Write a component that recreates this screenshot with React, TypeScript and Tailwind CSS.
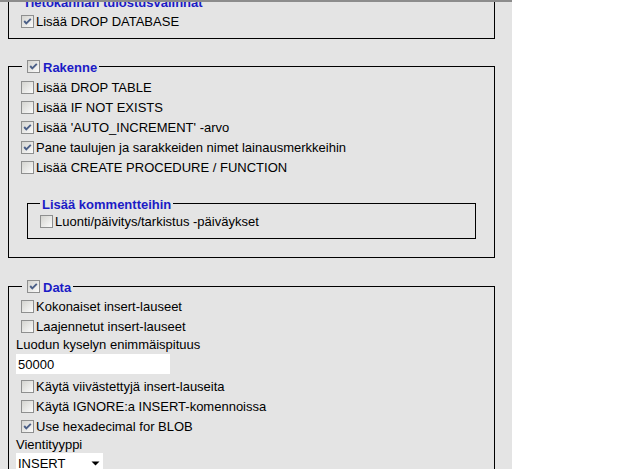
import React from "react";

type BoxProps = { checked?: boolean; className?: string };

function Box({ checked, className = "" }: BoxProps) {
  return (
    <span
      className={`inline-flex items-center justify-center w-[13px] h-[13px] shrink-0 border border-[#8e8f8f] bg-linear-to-br from-[#d4d4d0] to-[#fbfbfb] ${className}`}
    >
      {checked && (
        <svg width="11" height="11" viewBox="0 0 11 11">
          <polyline points="2.2,5 4.3,7.4 8.8,2.8" fill="none" stroke="#4b5f87" strokeWidth="1.9" />
        </svg>
      )}
    </span>
  );
}

function Row({ label, checked }: { label: string; checked?: boolean }) {
  return (
    <div className="flex items-center h-[20px]">
      <Box checked={checked} className="ml-[5px]" />
      <span className="ml-[2px] whitespace-nowrap translate-y-[1px]">{label}</span>
    </div>
  );
}

function Legend({ text, checked, withBox, offset }: { text: string; checked?: boolean; withBox?: boolean; offset: string }) {
  return (
    <legend className={`${offset} px-[2px] h-[15px] leading-[15px]`}>
      <span className="flex items-center">
        {withBox && <Box checked={checked} className="ml-[3px] mr-[3px]" />}
        <span className="font-bold text-[#1b1bc6] whitespace-nowrap translate-y-[1px]">{text}</span>
      </span>
    </legend>
  );
}

export default function App() {
  return (
    <div className="flex w-full h-[469px] bg-white text-[13px] text-black font-['Liberation_Sans',Arial,sans-serif]">
      <div className="w-[512px] h-full bg-[#e4e4e4] border-t-2 border-[#8c8c8c] overflow-hidden">
        {/* Tietokannan tulostusvalinnat */}
        <fieldset className="-mt-[8px] ml-[8px] w-[487px] border border-black px-[7px] pt-[2px] pb-[7px]">
          <Legend text="Tietokannan tulostusvalinnat" offset="ml-[5px]" />
          <Row label="Lisää DROP DATABASE" checked />
        </fieldset>

        {/* Rakenne */}
        <fieldset className="mt-[20px] ml-[8px] w-[487px] border border-black px-[7px] pt-[3px] pb-[18px]">
          <Legend text="Rakenne" withBox checked offset="ml-[6px]" />
          <Row label="Lisää DROP TABLE" />
          <Row label="Lisää IF NOT EXISTS" />
          <Row label="Lisää 'AUTO_INCREMENT' -arvo" checked />
          <Row label="Pane taulujen ja sarakkeiden nimet lainausmerkkeihin" checked />
          <Row label="Lisää CREATE PROCEDURE / FUNCTION" />

          <fieldset className="mt-[19px] ml-[11px] w-[449px] border border-black pl-[12px] pr-[7px] pb-[7px]">
            <Legend text="Lisää kommentteihin" offset="ml-0" />
            <div className="flex items-center h-[20px]">
              <Box />
              <span className="ml-[2px] whitespace-nowrap translate-y-[1px]">Luonti/päivitys/tarkistus -päiväykset</span>
            </div>
          </fieldset>
        </fieldset>

        {/* Data */}
        <fieldset className="mt-[21px] ml-[8px] w-[487px] h-[300px] border border-black px-[7px] pt-[2px]">
          <Legend text="Data" withBox checked offset="ml-[6px]" />
          <Row label="Kokonaiset insert-lauseet" />
          <Row label="Laajennetut insert-lauseet" />
          <div className="h-[16px] leading-[16px] whitespace-nowrap translate-y-[1px]">Luodun kyselyn enimmäispituus</div>
          <div className="mt-[2px] w-[154px] h-[20px] bg-white flex items-center pl-[2px]">
            <span className="translate-y-[1px]">50000</span>
          </div>
          <div className="mt-[2px]">
            <Row label="Käytä viivästettyjä insert-lauseita" />
            <Row label="Käytä IGNORE:a INSERT-komennoissa" />
            <Row label="Use hexadecimal for BLOB" checked />
          </div>
          <div className="h-[16px] leading-[16px] translate-y-[1px]">Vientityyppi</div>
          <div className="mt-[1px] w-[87px] h-[20px] bg-white flex items-center justify-between pl-[2px] pr-[3px]">
            <span className="translate-y-[1px]">INSERT</span>
            <svg width="9" height="5" viewBox="0 0 9 5">
              <polygon points="0.5,0.5 8.5,0.5 4.5,4.5" fill="#000" />
            </svg>
          </div>
        </fieldset>
      </div>
    </div>
  );
}
